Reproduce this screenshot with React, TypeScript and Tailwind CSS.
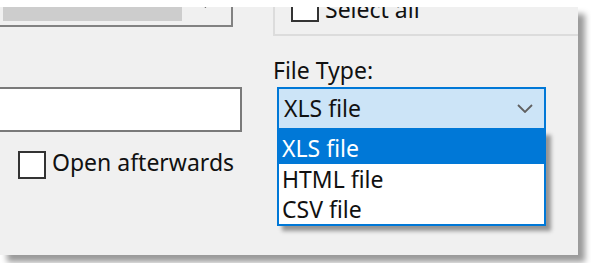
import * as React from 'react'

const FONT = { fontFamily: '"Noto Sans", "Open Sans", sans-serif' }

const Checkbox = () => (
    <span className="block h-[28px] w-[28px] shrink-0 border-2 border-[#333333] bg-white" />
)

const Chevron = ({ className }: { className?: string }) => (
    <svg className={className} width="16" height="9" viewBox="0 0 16 9" fill="none">
        <path d="M1 1 L8 8 L15 1" stroke="#606060" strokeWidth="1.8" />
    </svg>
)

export default function App() {
    const options = ['XLS file', 'HTML file', 'CSV file']

    return (
        <div className="h-[263px] w-[591px] overflow-hidden bg-white pt-[7px]" style={FONT}>
            <div className="h-[248px] w-[578px] overflow-hidden bg-[#f0f0f0] text-[23px] leading-[31px] text-[#111111] shadow-[7px_7px_6px_rgba(0,0,0,0.4)]">
                <div className="grid grid-cols-[273px_1fr]">
                    {/* left column */}
                    <div className="flex flex-col">
                        {/* listbox bottom with horizontal scrollbar */}
                        <div className="-mt-[14px] flex h-[34px] w-[233px] border-b-2 border-r-2 border-[#828282] bg-[#f0f0f0]">
                            <div className="mb-[4px] ml-[3px] h-[28px] w-[179px] self-end bg-[#cdcdcd]" />
                            <div className="flex flex-1 justify-end pr-[18px] pt-[3px]">
                                <svg width="10" height="12" viewBox="0 0 10 12" fill="none">
                                    <path d="M1.5 1 L8 6 L1.5 11" stroke="#505050" strokeWidth="2.4" />
                                </svg>
                            </div>
                        </div>

                        {/* text field */}
                        <div className="-ml-[2px] mt-[60px] h-[45px] w-[244px] border-2 border-[#7a7a7a] bg-white" />

                        {/* open afterwards */}
                        <div className="mt-[15px] flex items-center pl-[18px]">
                            <Checkbox />
                            <span className="ml-[6px] pb-[4px]">Open afterwards</span>
                        </div>
                    </div>

                    {/* right column */}
                    <div className="flex flex-col">
                        {/* group box bottom */}
                        <div className="-mt-[20px] flex h-[49px] items-end border-b-2 border-l-2 border-[#dcdcdc] pb-[12px] pl-[16px]">
                            <Checkbox />
                            <span className="-mb-[3px] ml-[6px]">Select all</span>
                        </div>

                        <div className="mt-[19px]">File Type:</div>

                        <div className="relative ml-[4px] mt-[1px] w-[269px]">
                            <div className="flex h-[43px] items-center justify-between border-2 border-[#0078d7] bg-[#cce4f7] pl-[5px] pr-[11px]">
                                <span>XLS file</span>
                                <Chevron />
                            </div>

                            <ul className="absolute left-0 top-full w-full border-x-2 border-b-2 border-[#0078d7] bg-white shadow-[5px_5px_4px_rgba(0,0,0,0.38)]">
                                {options.map((opt, i) => (
                                    <li
                                        key={opt}
                                        className={
                                            i === 0
                                                ? 'h-[34px] bg-[#0078d7] pl-[3px] pt-[4px] leading-[29px] text-white'
                                                : 'h-[30px] pl-[3px] leading-[30px]'
                                        }
                                    >
                                        {opt}
                                    </li>
                                ))}
                            </ul>
                        </div>
                    </div>
                </div>
            </div>
        </div>
    )
}
